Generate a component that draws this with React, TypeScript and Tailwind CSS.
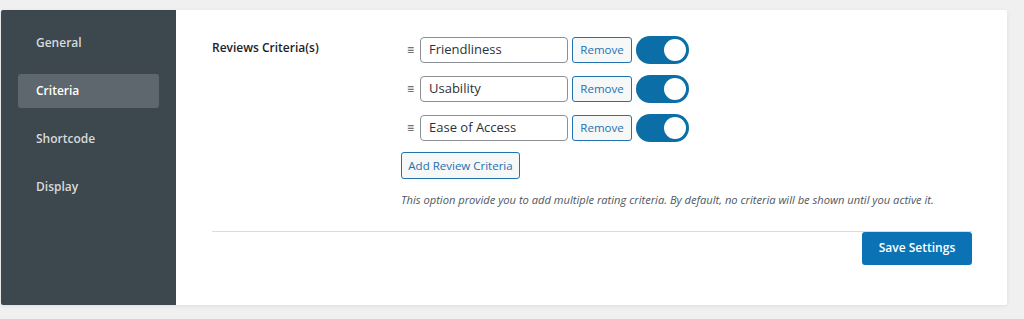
const nav = ['General', 'Criteria', 'Shortcode', 'Display'];
const criteria = ['Friendliness', 'Usability', 'Ease of Access'];

function Toggle() {
  return (
    <span className="flex h-[28px] w-[53px] items-center justify-end rounded-full bg-[#0b6ea6] pr-[3px]">
      <span className="h-[22px] w-[22px] rounded-full bg-white" />
    </span>
  );
}

export default function App() {
  return (
    <div className="h-[319px] w-[1024px] bg-[#f0f0f1] pt-[10px] pl-px font-['Open_Sans',sans-serif]">
      <div className="flex h-[295px] w-[1006px] overflow-hidden rounded-[2px] bg-white shadow-[0_1px_4px_rgba(0,0,0,0.08)]">
        <nav className="flex w-[175px] flex-col gap-[14px] bg-[#3d474e] pt-[16px] pl-[17px]">
          {nav.map((n) => (
            <div
              key={n}
              className={
                'flex h-[34px] w-[141px] items-center rounded-[3px] pl-[18px] text-[12px] font-semibold ' +
                (n === 'Criteria' ? 'bg-[#5d676d] text-white' : 'text-[#d7dadc]')
              }
            >
              {n}
            </div>
          ))}
        </nav>
        <main className="flex-1 pt-[27px] pl-[36px] pr-[35px]">
          <div className="flex">
            <div className="w-[189px] pt-[2px] text-[12px] font-semibold text-[#1d2327]">Reviews Criteria(s)</div>
            <div className="flex flex-col">
              {criteria.map((c) => (
                <div key={c} className="mb-[13px] flex h-[26px] items-center">
                  <span className="w-[19px] text-center text-[12px] leading-none text-[#50575e]">≡</span>
                  <div className="flex h-[26px] w-[148px] items-center rounded-[4px] border border-[#8c8f94] px-[8px] text-[13px] text-[#2c3338]">
                    {c}
                  </div>
                  <button className="ml-[4px] h-[26px] w-[60px] rounded-[3px] border border-[#2271b1] bg-[#f6f7f7] text-[11.5px] text-[#2271b1]">
                    Remove
                  </button>
                  <span className="ml-[4px]">
                    <Toggle />
                  </span>
                </div>
              ))}
              <button className="mt-[-2px] h-[27px] w-[119px] rounded-[3px] border border-[#2271b1] bg-[#f6f7f7] text-[11.5px] text-[#2271b1]">
                Add Review Criteria
              </button>
              <p className="mt-[13px] text-[11.15px] italic text-[#50575e]">
                This option provide you to add multiple rating criteria. By default, no criteria will be shown until you active it.
              </p>
            </div>
          </div>
          <div className="mt-[22px] border-t border-[#dcdcde]" />
          <div className="flex justify-end">
            <button className="h-[33px] w-[110px] rounded-[3px] bg-[#0b73b5] text-[12px] font-semibold text-white">
              Save Settings
            </button>
          </div>
        </main>
      </div>
    </div>
  );
}
